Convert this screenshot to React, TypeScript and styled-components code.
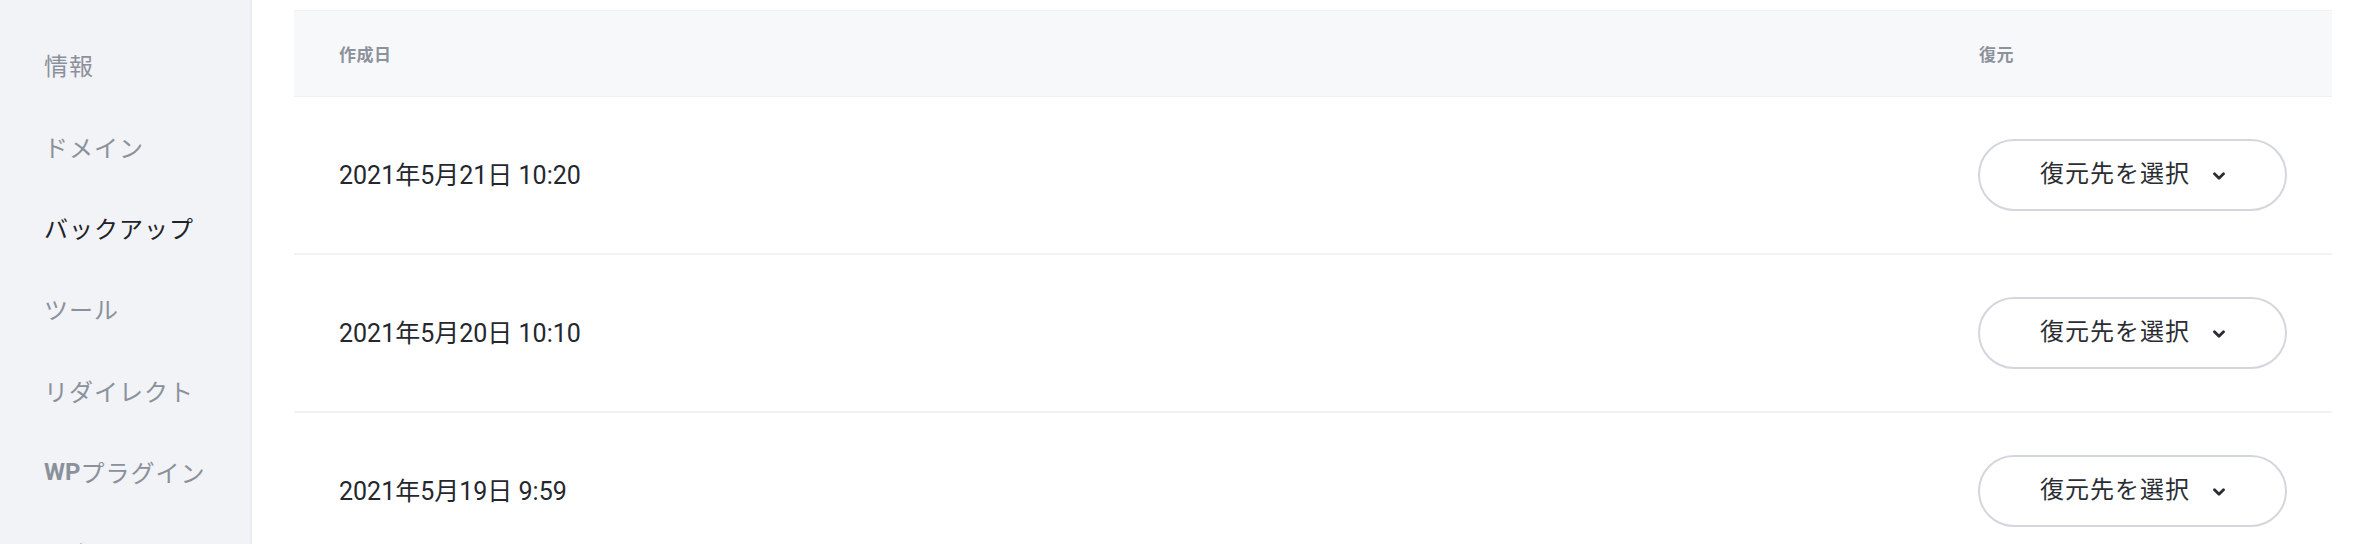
import styled, { createGlobalStyle } from 'styled-components';

const GlobalStyle = createGlobalStyle`
  html, body {
    margin: 0;
    padding: 0;
    background: #ffffff;
  }
  body {
    font-family: Roboto, "Noto Sans CJK JP", "Noto Sans", sans-serif;
    overflow: hidden;
  }
`;

const Page = styled.div`
  display: flex;
  height: 544px;
  overflow: hidden;
`;

const Sidebar = styled.nav`
  width: 250px;
  flex-shrink: 0;
  background: #f1f3f7;
  border-right: 2px solid #e8ebf0;
  padding-top: 24px;
  box-sizing: content-box;
`;

const NavItem = styled.div<{ $active?: boolean }>`
  height: 81.4px;
  display: flex;
  align-items: center;
  padding-left: 44px;
  font-size: 24px;
  letter-spacing: 1px;
  color: ${(p) => (p.$active ? '#1f2329' : '#8b919a')};

  b {
    font-weight: 700;
    letter-spacing: 0;
  }
`;

const Main = styled.main`
  flex: 1;
  padding: 10px 34px 0 42px;
`;

const Table = styled.div`
  border-top: 1px solid #eef0f4;
`;

const HeadRow = styled.div`
  display: grid;
  grid-template-columns: 1fr 398px;
  height: 85px;
  align-items: center;
  background: #f7f8fa;
  border-bottom: 1px solid #eef0f4;
`;

const HeadCell = styled.div`
  padding: 0 45px;
  font-size: 17px;
  font-weight: 700;
  letter-spacing: 0.5px;
  color: #8c929b;
`;

const Row = styled.div`
  display: grid;
  grid-template-columns: 1fr 398px;
  height: 156px;
  align-items: center;
  border-bottom: 2px solid #f1f2f6;
`;

const Cell = styled.div`
  padding: 0 45px;
  font-size: 25px;
  line-height: 1;
  color: #24282e;
`;

const RestoreButton = styled.button`
  width: 309px;
  height: 72px;
  border: 2px solid #d3d7dd;
  border-radius: 36px;
  background: #ffffff;
  display: flex;
  align-items: center;
  justify-content: center;
  gap: 23px;
  font-family: Roboto, "Noto Sans CJK JP", sans-serif;
  font-size: 24px;
  line-height: 1;
  letter-spacing: 1px;
  color: #2a2e33;
  padding: 0 0 2px;
  margin-left: -1px;
  cursor: pointer;

  svg {
    margin-top: 5px;
  }
`;

const Chevron = () => (
  <svg width="12" height="9" viewBox="0 0 12 9" fill="none">
    <path d="M1.5 1.8 6 6.3 10.5 1.8" stroke="#2a2e33" strokeWidth="2.8" strokeLinecap="round" strokeLinejoin="round" />
  </svg>
);

const navItems = ['情報', 'ドメイン', 'バックアップ', 'ツール', 'リダイレクト', 'WPプラグイン', '設定'];

const backups = ['2021年5月21日 10:20', '2021年5月20日 10:10', '2021年5月19日 9:59'];

export default function App() {
  return (
    <Page>
      <GlobalStyle />
      <Sidebar>
        {navItems.map((item) => (
          <NavItem key={item} $active={item === 'バックアップ'}>
            {item.startsWith('WP') ? (
              <>
                <b>WP</b>
                {item.slice(2)}
              </>
            ) : (
              item
            )}
          </NavItem>
        ))}
      </Sidebar>
      <Main>
        <Table>
          <HeadRow>
            <HeadCell>作成日</HeadCell>
            <HeadCell>復元</HeadCell>
          </HeadRow>
          {backups.map((date) => (
            <Row key={date}>
              <Cell>{date}</Cell>
              <Cell>
                <RestoreButton>
                  復元先を選択
                  <Chevron />
                </RestoreButton>
              </Cell>
            </Row>
          ))}
        </Table>
      </Main>
    </Page>
  );
}
